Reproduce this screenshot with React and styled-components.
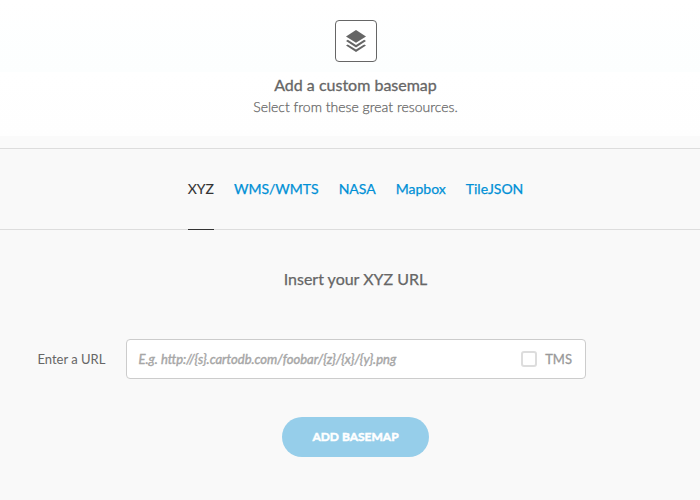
import React from 'react';
import styled, { createGlobalStyle } from 'styled-components';

const GlobalStyle = createGlobalStyle`
  *, *::before, *::after { box-sizing: border-box; }
  body { margin: 0; font-family: Lato, sans-serif; background: #f9f9f9; color: #666; }
`;
const Page = styled.main`
  width: 700px;
  height: 500px;
  overflow: hidden;
  background: #f9f9f9;
`;
const Header = styled.header`
  height: 148px;
  padding: 20px 0 0 11px;
  display: flex;
  flex-direction: column;
  align-items: center;
  background: linear-gradient(#fff, #fcfefe 72px, #fff 72px, #fefefe 136px, #fafafa 136px);
`;
const IconFrame = styled.div`
  width: 42px;
  height: 42px;
  border: 1px solid #666;
  border-radius: 4px;
  display: grid;
  place-items: center;
  background: #fff;
`;
const Title = styled.h1`
  margin: 12px 0 0;
  font-size: 16px;
  line-height: 22px;
  font-weight: 400;
  -webkit-text-stroke: 0.3px currentColor;
`;
const Subtitle = styled.p`
  margin: 0;
  font-size: 14px;
  line-height: 21px;
  font-weight: 300;
  -webkit-text-stroke: 0.25px currentColor;
`;
const Tabs = styled.nav`
  height: 82px;
  padding-left: 11px;
  display: flex;
  justify-content: center;
  gap: 20px;
  border-top: 1px solid #ddd;
  border-bottom: 1px solid #ddd;
`;
const Tab = styled.a`
  height: 81px;
  padding-top: 30px;
  font-size: 14px;
  line-height: 20px;
  color: ${(p) => (p.$active ? '#333' : '#0090d6')};
  border-bottom: 1px solid ${(p) => (p.$active ? '#333' : 'transparent')};
  -webkit-text-stroke: ${(p) => (p.$active ? '0.1px' : '0.25px')} currentColor;
`;
const FormTitle = styled.h2`
  margin: 38px 0 0;
  padding-left: 11px;
  text-align: center;
  font-size: 16px;
  line-height: 22px;
  font-weight: 400;
  -webkit-text-stroke: 0.25px currentColor;
`;
const Row = styled.div`
  margin-top: 49px;
  padding-left: 37.5px;
  display: flex;
  align-items: center;
`;
const Label = styled.label`
  width: 88.5px;
  font-size: 13px;
`;
const Field = styled.div`
  width: 460px;
  height: 40px;
  padding: 0 13px 0 11.5px;
  display: flex;
  align-items: center;
  border: 1px solid #ccc;
  border-radius: 4px;
  background: #fff;
`;
const Placeholder = styled.span`
  flex: 1;
  font-size: 13px;
  font-style: italic;
  color: #a6a6a6;
  -webkit-text-stroke: 0.4px currentColor;
`;
const Checkbox = styled.span`
  width: 16px;
  height: 16px;
  margin-right: 8px;
  border: 2px solid #ddd;
  border-radius: 3px;
`;
const Option = styled.span`
  font-size: 13px;
  color: #999;
  -webkit-text-stroke: 0.3px currentColor;
`;
const Actions = styled.div`
  margin-top: 38px;
  padding-left: 11px;
  display: flex;
  justify-content: center;
`;
const Button = styled.button`
  width: 147px;
  height: 40px;
  padding: 0 0 1px;
  border: 0;
  border-radius: 20px;
  font: 700 12px Lato, sans-serif;
  color: #fff;
  background: #96ceea;
  -webkit-text-stroke: 0.5px currentColor;
`;

const tabs = ['XYZ', 'WMS/WMTS', 'NASA', 'Mapbox', 'TileJSON'];

export default function App() {
  return (
    <Page>
      <GlobalStyle />
      <Header>
        <IconFrame>
          <svg width="20" height="22" viewBox="0 0 20 22" fill="#666">
            <path d="M10 0 20 6.4 10 12.8 0 6.4Z" />
            <path d="M0 11 1.8 9.8 10 15 18.2 9.8 20 11 10 17.4Z" />
            <path d="M0 15.6 1.8 14.4 10 19.6 18.2 14.4 20 15.6 10 22Z" />
          </svg>
        </IconFrame>
        <Title>Add a custom basemap</Title>
        <Subtitle>Select from these great resources.</Subtitle>
      </Header>
      <Tabs>
        {tabs.map((t, i) => <Tab key={t} $active={i === 0}>{t}</Tab>)}
      </Tabs>
      <FormTitle>Insert your XYZ URL</FormTitle>
      <Row>
        <Label>Enter a URL</Label>
        <Field>
          <Placeholder>{'E.g. http://{s}.cartodb.com/foobar/{z}/{x}/{y}.png'}</Placeholder>
          <Checkbox />
          <Option>TMS</Option>
        </Field>
      </Row>
      <Actions><Button>ADD BASEMAP</Button></Actions>
    </Page>
  );
}
